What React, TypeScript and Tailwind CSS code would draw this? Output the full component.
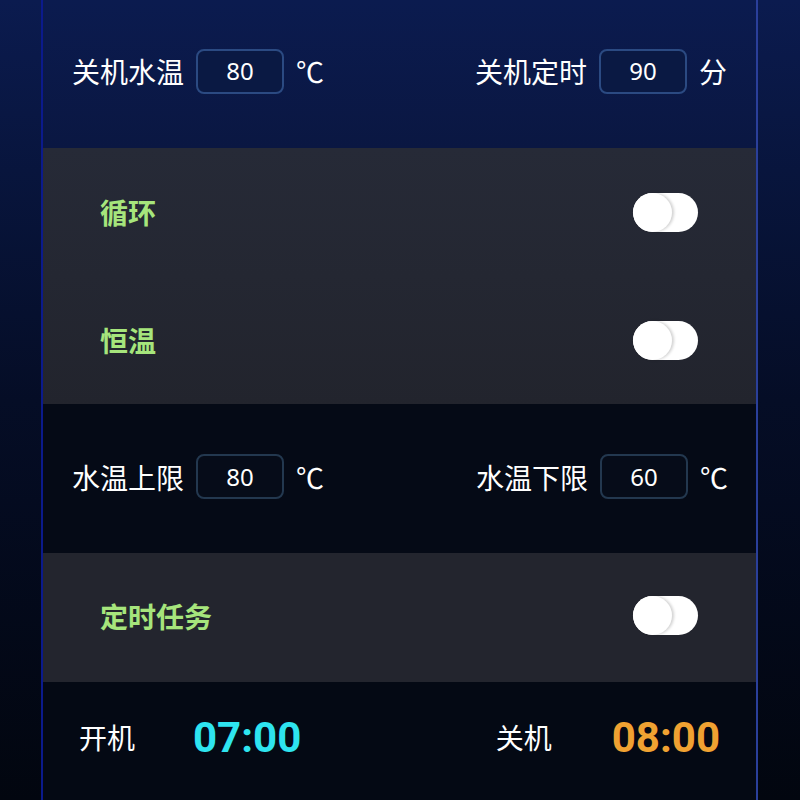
import React from "react";

const cjk = { fontFamily: '"Noto Sans CJK SC", "Noto Sans", sans-serif' };

function NumBox({ value, dark }: { value: string; dark?: boolean }) {
  return (
    <div
      className={
        "flex h-[45px] w-[88px] items-center justify-center rounded-lg border-2 text-[24px] text-white " +
        (dark ? "border-[#23384f] bg-[#060c19]" : "border-[#2b4a82] bg-[#0a1943]")
      }
      style={{ fontFamily: '"Noto Sans", sans-serif' }}
    >
      {value}
    </div>
  );
}

function Field({ label, value, unit, dark }: { label: string; value: string; unit: string; dark?: boolean }) {
  return (
    <div className="flex items-center gap-3 text-[28px] text-white" style={cjk}>
      <span>{label}</span>
      <NumBox value={value} dark={dark} />
      <span>{unit}</span>
    </div>
  );
}

function Toggle() {
  return (
    <div className="flex h-[39px] w-[65px] items-center rounded-full bg-white">
      <div className="h-[39px] w-[39px] rounded-full bg-white shadow-[2px_0_3px_rgba(0,0,0,0.18)]" />
    </div>
  );
}

function SwitchRow({ label }: { label: string }) {
  return (
    <div className="flex h-[128px] items-center justify-between pl-[57px] pr-[58px]">
      <span className="text-[28px] font-bold text-[#a6e57c]" style={cjk}>
        {label}
      </span>
      <Toggle />
    </div>
  );
}

export default function App() {
  return (
    <div className="flex h-[800px] w-[800px] overflow-hidden bg-linear-to-b from-[#0b1b4f] via-[#050d26] to-[#02060f] pl-[41px]">
      <div className="flex h-full w-[717px] flex-col border-x-2 border-l-[#0b1a8c] border-r-[#2a3f9a]">
        <div className="flex h-[148px] items-center justify-between bg-linear-to-b from-[#0b1b4f] to-[#0a1742] pb-[6px] pl-[29px] pr-[29px]">
          <Field label="关机水温" value="80" unit="℃" />
          <Field label="关机定时" value="90" unit="分" />
        </div>

        <div className="flex h-[256px] flex-col bg-linear-to-b from-[#262a37] to-[#22242d]">
          <SwitchRow label="循环" />
          <SwitchRow label="恒温" />
        </div>

        <div className="flex h-[149px] items-center justify-between bg-[#050a16] pb-[4px] pl-[29px] pr-[28px]">
          <Field label="水温上限" value="80" unit="℃" dark />
          <div className="pl-[3px]">
            <Field label="水温下限" value="60" unit="℃" dark />
          </div>
        </div>

        <div className="flex h-[129px] flex-col justify-center bg-[#23252e] pb-[4px]">
          <SwitchRow label="定时任务" />
        </div>

        <div className="flex flex-1 items-center justify-between bg-[#040914] pb-[8px] pl-[36px] pr-[36px]">
          <div className="flex items-center gap-[58px]">
            <span className="text-[28px] text-white" style={cjk}>开机</span>
            <span className="text-[42px] font-bold text-[#2ee4ef]" style={{ fontFamily: "Roboto, sans-serif" }}>
              07:00
            </span>
          </div>
          <div className="flex items-center gap-[60px]">
            <span className="text-[28px] text-white" style={cjk}>关机</span>
            <span className="text-[42px] font-bold text-[#f0a232]" style={{ fontFamily: "Roboto, sans-serif" }}>
              08:00
            </span>
          </div>
        </div>
      </div>
    </div>
  );
}
